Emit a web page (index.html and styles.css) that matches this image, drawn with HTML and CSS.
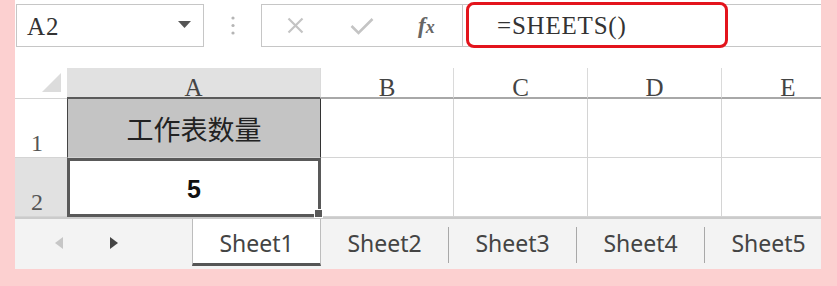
FILE: index.html
```html
<!DOCTYPE html>
<html lang="zh-CN">
<head>
    <meta charset="UTF-8">
    <meta name="viewport" content="width=device-width, initial-scale=1.0">
    <title>SHEETS</title>
    <link rel="stylesheet" href="styles.css">
</head>
<body>

    <div class="sheet">
        <div class="formula-bar">
            <div class="name-box">
                <span>A2</span>
                <svg class="drop" width="13" height="7" viewBox="0 0 13 7"><polygon points="0,0 13,0 6.5,7" fill="#555"/></svg>
            </div>
            <div class="grip">
                <svg width="4" height="20" viewBox="0 0 4 20"><circle cx="2" cy="2" r="1.6" fill="#b5b5b5"/><circle cx="2" cy="9.5" r="1.6" fill="#b5b5b5"/><circle cx="2" cy="17" r="1.6" fill="#b5b5b5"/></svg>
            </div>
            <div class="fx-box">
                <svg class="cancel" width="17" height="17" viewBox="0 0 17 17"><path d="M1.5 1.5 L15.5 15.5 M15.5 1.5 L1.5 15.5" stroke="#c4c4c4" stroke-width="2.2" fill="none"/></svg>
                <svg class="enter" width="24" height="18" viewBox="0 0 24 18"><path d="M1.5 9 L8.5 16 L22.5 2" stroke="#c4c4c4" stroke-width="2.6" fill="none"/></svg>
                <span class="fx">f<span>x</span></span>
            </div>
            <div class="formula-input">
                <div class="formula-text">=SHEETS()</div>
            </div>
        </div>

        <div class="grid">
            <div class="corner">
                <svg width="19" height="19" viewBox="0 0 19 19"><polygon points="19,0 19,19 0,19" fill="#dcdcdc"/></svg>
            </div>
            <div class="col-head selected">A</div>
            <div class="col-head">B</div>
            <div class="col-head">C</div>
            <div class="col-head">D</div>
            <div class="col-head">E</div>

            <div class="row-head">1</div>
            <div class="cell title">工作表数量</div>
            <div class="cell"></div>
            <div class="cell"></div>
            <div class="cell"></div>
            <div class="cell"></div>

            <div class="row-head selected">2</div>
            <div class="cell current">5<span class="fill-handle"></span></div>
            <div class="cell"></div>
            <div class="cell"></div>
            <div class="cell"></div>
            <div class="cell"></div>
        </div>

        <div class="tab-bar">
            <div class="tab-nav">
                <svg width="8" height="12" viewBox="0 0 8 12"><polygon points="8,0 8,12 0,6" fill="#c6c6c6"/></svg>
                <svg width="8" height="12" viewBox="0 0 8 12"><polygon points="0,0 0,12 8,6" fill="#444"/></svg>
            </div>
            <div class="tab active">Sheet1</div>
            <div class="tab">Sheet2</div>
            <span class="sep"></span>
            <div class="tab">Sheet3</div>
            <span class="sep"></span>
            <div class="tab">Sheet4</div>
            <span class="sep"></span>
            <div class="tab">Sheet5</div>
        </div>
    </div>

</body>
</html>
```

FILE: styles.css
```css
body {
    margin: 0;
    background-color: #fcd0d0;
}

.sheet {
    margin-left: 15px;
    width: 806px;
    height: 269px;
    background: #fff;
    overflow: hidden;
}

/* formula bar */

.formula-bar {
    display: flex;
    align-items: flex-start;
    height: 48px;
    padding: 4px 0 0 1px;
    box-sizing: border-box;
    margin-bottom: 20px;
}

.name-box {
    display: flex;
    align-items: center;
    justify-content: space-between;
    width: 188px;
    height: 43px;
    box-sizing: border-box;
    border: 1px solid #c6c6c6;
    padding: 2px 12px 0 10px;
    font-family: "Liberation Serif", serif;
    font-size: 25px;
    letter-spacing: 1px;
    color: #333;
}

.name-box .drop {
    margin-bottom: 4px;
}

.grip {
    display: flex;
    justify-content: center;
    align-items: center;
    width: 57px;
    height: 43px;
}

.fx-box {
    display: flex;
    align-items: center;
    width: 202px;
    height: 43px;
    box-sizing: border-box;
    border: 1px solid #c6c6c6;
    padding-left: 25px;
}

.fx-box .enter {
    margin-left: 46px;
}

.fx-box .fx {
    margin-left: 44px;
    font-family: "Liberation Serif", serif;
    font-style: italic;
    font-weight: bold;
    font-size: 23px;
    color: #666;
}

.fx-box .fx span {
    font-size: 18px;
}

.formula-input {
    flex: 1;
    height: 43px;
    box-sizing: border-box;
    border-top: 1px solid #c6c6c6;
    border-bottom: 1px solid #c6c6c6;
}

.formula-text {
    display: flex;
    align-items: center;
    width: 262px;
    height: 46px;
    margin: -3px 0 0 3px;
    box-sizing: border-box;
    border: 3px solid #e3141c;
    border-radius: 8px;
    padding: 2px 0 0 28px;
    font-family: "Liberation Serif", serif;
    font-size: 25px;
    letter-spacing: 0.8px;
    color: #333;
}

/* cells */

.grid {
    display: grid;
    grid-template-columns: 52px 254px 133px 134px 134px 133px;
    grid-template-rows: 31px 59px 59px;
}

.corner {
    display: flex;
    justify-content: flex-end;
    align-items: flex-end;
    padding: 0 6px 6px 0;
    border-bottom: 1px solid #d4d4d4;
}

.col-head {
    display: flex;
    justify-content: center;
    padding-top: 7px;
    box-sizing: border-box;
    border-right: 1px solid #dadada;
    border-bottom: 2px solid #a8a8a8;
    font-family: "Liberation Serif", serif;
    font-size: 25px;
    line-height: 1;
    color: #444;
}

.col-head.selected {
    background: #e1e1e1;
    border-bottom-color: #5a5a5a;
}

.row-head {
    display: flex;
    align-items: flex-end;
    padding: 0 0 2px 16px;
    box-sizing: border-box;
    border-bottom: 1px solid #d4d4d4;
    font-family: "Liberation Serif", serif;
    font-size: 24px;
    line-height: 1;
    color: #555;
}

.row-head.selected {
    background: #e1e1e1;
}

.cell {
    box-sizing: border-box;
    border-right: 1px solid #d4d4d4;
    border-bottom: 1px solid #d4d4d4;
}

.cell.title {
    display: flex;
    justify-content: center;
    align-items: center;
    background: #c4c4c4;
    border-left: 1px solid #444;
    border-right: 1px solid #333;
    font-family: "Noto Sans CJK SC", sans-serif;
    font-size: 27px;
    color: #222;
}

.cell.current {
    position: relative;
    display: flex;
    justify-content: center;
    align-items: center;
    padding-top: 4px;
    border: 3px solid #595959;
    font-family: "Liberation Sans", Arial, sans-serif;
    font-weight: bold;
    font-size: 25px;
    color: #111;
}

.fill-handle {
    position: absolute;
    right: -5px;
    bottom: -4px;
    width: 7px;
    height: 7px;
    background: #595959;
    border: 1px solid #fff;
}

/* sheet tabs */

.tab-bar {
    display: flex;
    align-items: flex-start;
    height: 52px;
    box-sizing: border-box;
    border-top: 2px solid #cbcbcb;
    background: #f3f3f3;
    font-family: "Noto Sans", sans-serif;
    font-size: 23px;
    color: #444;
}

.tab-nav {
    display: flex;
    align-items: center;
    gap: 47px;
    width: 177px;
    height: 47px;
    padding-left: 40px;
    box-sizing: border-box;
    flex-shrink: 0;
}

.tab {
    display: flex;
    justify-content: center;
    align-items: center;
    width: 127px;
    height: 47px;
    box-sizing: border-box;
    flex-shrink: 0;
}

.tab.active {
    width: 129px;
    background: #fff;
    border-left: 1px solid #bdbdbd;
    border-right: 1px solid #bdbdbd;
    border-bottom: 3px solid #555;
    padding-top: 3px;
}

.sep {
    width: 1px;
    height: 36px;
    margin-top: 8px;
    background: #a8a8a8;
    flex-shrink: 0;
}
```
